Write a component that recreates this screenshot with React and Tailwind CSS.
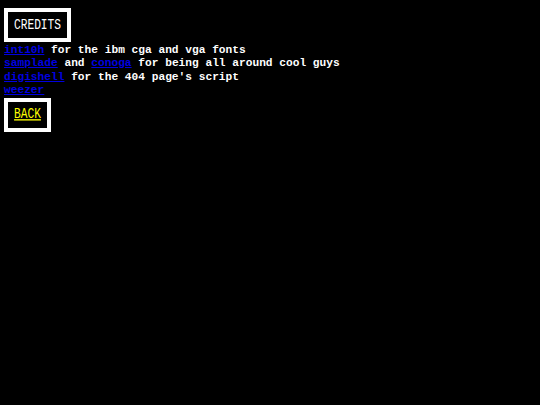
export default function App() {
  const mono = { fontFamily: '"Liberation Mono", "DejaVu Sans Mono", monospace' };

  return (
    <main
      className="min-h-[405px] w-full bg-black pl-1 pt-2 text-white"
      style={mono}
    >
      <div className="inline-flex h-[34px] w-[67px] items-center justify-center border-4 border-white bg-black pt-px">
        <h1 className="scale-y-[1.35] text-[11.2px] leading-none font-normal text-white">
          CREDITS
        </h1>
      </div>

      <div className="pt-[1.5px] text-[11.2px] leading-[13.5px] font-bold">
        <p>
          <a href="#" className="text-[#0000e0] underline">int10h</a> for the ibm cga and vga fonts
        </p>
        <p>
          <a href="#" className="text-[#0000e0] underline">samplade</a> and{" "}
          <a href="#" className="text-[#0000e0] underline">conoga</a> for being all around cool guys
        </p>
        <p>
          <a href="#" className="text-[#0000e0] underline">digishell</a> for the 404 page's script
        </p>
        <p>
          <a href="#" className="text-[#0000e0] underline">weezer</a>
        </p>
      </div>

      <div className="inline-flex h-[34px] w-[47px] items-center justify-center border-4 border-white bg-black">
        <a href="#" className="scale-y-[1.35] text-[11.2px] leading-none text-[#ffff00] underline">
          BACK
        </a>
      </div>
    </main>
  );
}
